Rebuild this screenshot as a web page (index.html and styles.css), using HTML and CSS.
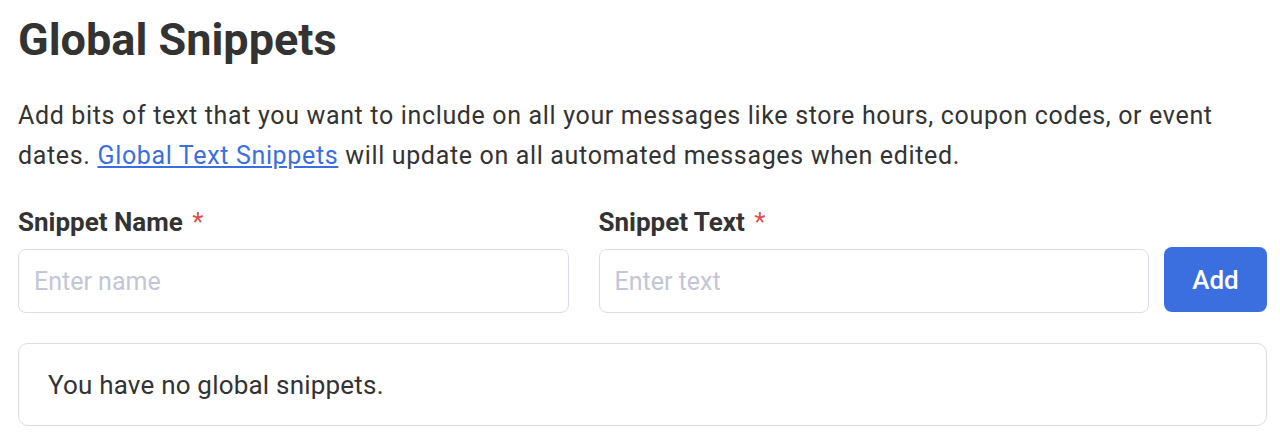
FILE: index.html
```html
<!DOCTYPE html>
<html>
<head>
<meta charset="UTF-8">
<title>Global Snippets</title>
<link rel="stylesheet" href="styles.css">
</head>
<body>
<div class="page">
	<h1>Global Snippets</h1>
	<p class="intro">Add bits of text that you want to include on all your messages like store hours, coupon codes, or event dates. <a href="#">Global Text Snippets</a> will update on all automated messages when edited.</p>

	<div class="form">
		<div class="field">
			<label>Snippet Name <span class="req">*</span></label>
			<input type="text" placeholder="Enter name" />
		</div>
		<div class="field">
			<label>Snippet Text <span class="req">*</span></label>
			<input type="text" placeholder="Enter text" />
		</div>
		<button class="add">Add</button>
	</div>

	<div class="empty">You have no global snippets.</div>
</div>
</body>
</html>
```

FILE: styles.css
```css
body {
margin:0;
background:#fff;
font-family:Roboto, "Liberation Sans", sans-serif;
color:#333;
}
.page {
padding:14px 13px 0 18px;
}
h1 {
margin:0;
font-size:45px;
font-weight:700;
line-height:52px;
color:#333;
}
.intro {
margin:30px 0 0 0;
font-size:25px;
letter-spacing:0.66px;
line-height:40px;
color:#333;
}
.intro a {
color:#3b6fe0;
}
.form {
display:flex;
align-items:flex-end;
margin-top:31px;
}
.field {
flex:1;
display:flex;
flex-direction:column;
margin-right:30px;
}
.field + .field {
margin-right:15px;
}
.field label {
font-size:26px;
font-weight:700;
line-height:30px;
margin-bottom:12px;
}
.req {
color:#d9534f;
font-weight:400;
margin-left:3px;
}
.field input {
height:64px;
box-sizing:border-box;
border:1px solid #dcdde6;
border-radius:8px;
padding:0 15px;
font-family:Roboto, "Liberation Sans", sans-serif;
font-size:25px;
color:#333;
outline:none;
}
.field input::placeholder {
color:#c3c6d6;
}
.add {
width:103px;
height:65px;
margin-bottom:1px;
border:0;
border-radius:8px;
background:#3b6fe0;
color:#fff;
font-family:Roboto, "Liberation Sans", sans-serif;
font-size:26px;
font-weight:500;
}
.empty {
margin-top:30px;
height:83px;
box-sizing:border-box;
border:1px solid #dcdde6;
border-radius:10px;
padding:0 29px;
display:flex;
align-items:center;
font-size:26px;
letter-spacing:0.2px;
color:#333;
}
```
